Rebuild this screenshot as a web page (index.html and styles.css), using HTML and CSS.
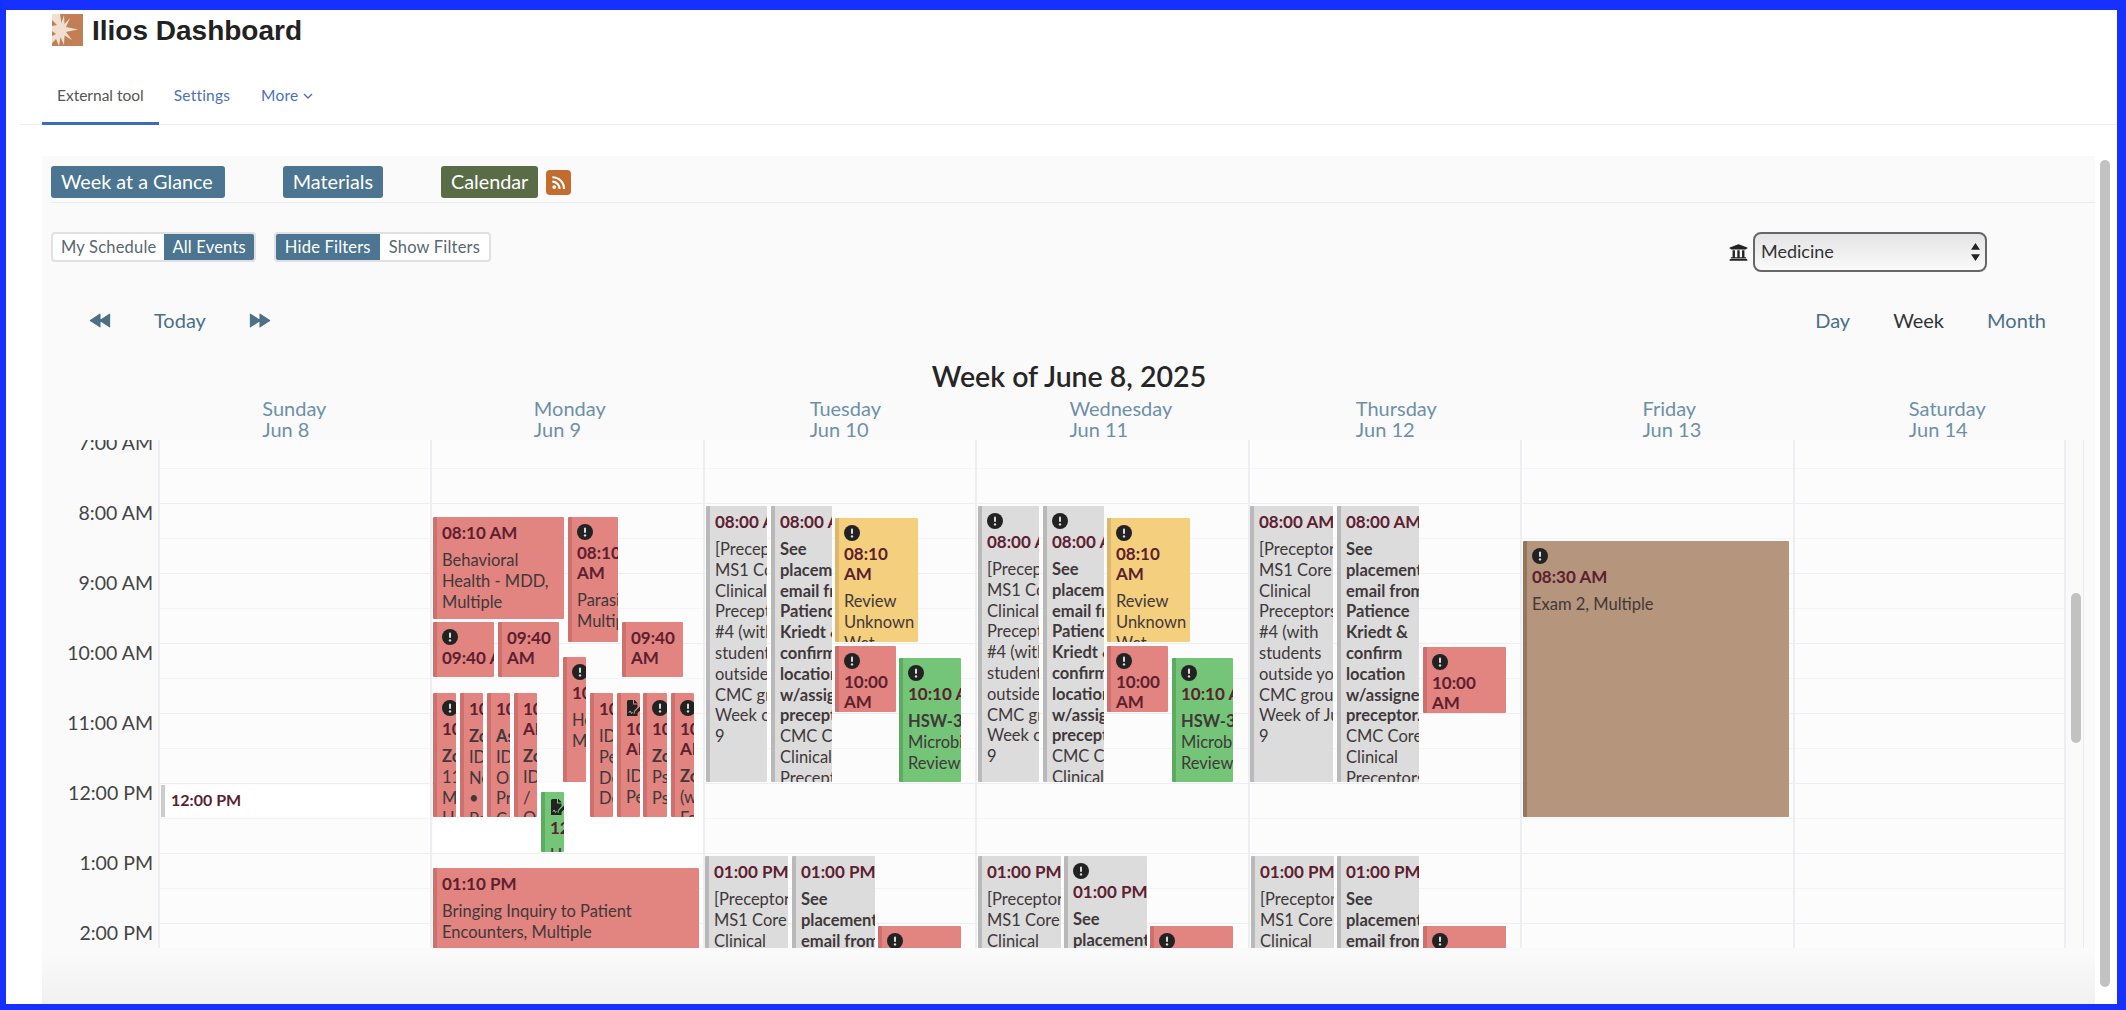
FILE: index.html
```html
<!DOCTYPE html>
<html lang="en">
<head>
<meta charset="utf-8">
<title>Ilios Dashboard</title>
<link rel="stylesheet" href="styles.css">
</head>
<body>
<svg class="defs" width="0" height="0" aria-hidden="true">
  <symbol id="alert" viewBox="0 0 16 16"><circle cx="8" cy="8" r="8" fill="#222"/><rect x="7" y="3.6" width="2" height="5.4" rx="1" fill="#dcdcdc"/><circle cx="8" cy="11.400" r="1.200" fill="#dcdcdc"/></symbol>
  <symbol id="doc" viewBox="0 0 16 16"><path d="M1 1.5A1.5 1.5 0 0 1 2.500 0H7v4.500h4.500V7L8 11l-.5 3 3-.7 1-1V16H1z" fill="#222"/><path d="M8.500 0l3 3v.5h-3.500V0z" fill="#222"/><path d="M9 11.500l5-5 2 2-5 5-2.500.5z" fill="#222"/><path d="M3 12.500c1-2 1.500-1.500 2 0s1 .5 1.500 0" fill="none" stroke="#ddd" stroke-width="1"/></symbol>
</svg>
<div class="frame">
  <header class="site-head">
    <svg class="logo" viewBox="0 0 31 32" aria-hidden="true">
      <rect width="31" height="32" fill="#c27f55"/>
      <path d="M0 0H8L9.500 9 12 1 12.500 10 18 4 14 13 26 15.500 14 18 20 26 12.500 21.500 12 31 8.500 23 7 32 4 25 0 29 0 22 4 20 0 17 0 12 5 11 0 6z" fill="#f0dfd0"/>
    </svg>
    <h1 class="site-title">Ilios Dashboard</h1>
  </header>
  <nav class="tabs">
    <a class="tab tab-on">External tool</a>
    <a class="tab">Settings</a>
    <a class="tab tab-more">More <svg class="chev" viewBox="0 0 10 6" aria-hidden="true"><path d="M1 1l4 4 4-4" fill="none" stroke="#4a72b8" stroke-width="1.400"/></svg></a>
  </nav>
  <main class="panel">
    <div class="main-nav">
      <a class="btn btn-wide">Week at a Glance</a>
      <a class="btn">Materials</a>
      <span class="btn-group">
        <a class="btn btn-on">Calendar</a>
        <span class="rss"><svg viewBox="0 0 16 16" aria-hidden="true"><circle cx="4" cy="12.300" r="1.800" fill="#fff"/><path d="M2.200 7.200a6.800 6.800 0 0 1 6.800 6.800M2.200 3a11 11 0 0 1 11 11" fill="none" stroke="#fff" stroke-width="2"/></svg></span>
      </span>
    </div>
    <div class="filter-row">
      <div class="toggles">
        <div class="toggle"><span class="opt">My Schedule</span><span class="opt opt-on">All Events</span></div>
        <div class="toggle toggle-wide"><span class="opt opt-on">Hide Filters</span><span class="opt">Show Filters</span></div>
      </div>
      <div class="school">
        <svg class="bank" viewBox="0 0 512 512" aria-hidden="true"><path d="M496 128v16a8 8 0 0 1-8 8h-24v12c0 6.627-5.373 12-12 12H60c-6.627 0-12-5.373-12-12v-12H24a8 8 0 0 1-8-8v-16a8 8 0 0 1 4.941-7.392l232-88a7.996 7.996 0 0 1 6.118 0l232 88A8 8 0 0 1 496 128zm-24 304H40c-13.255 0-24 10.745-24 24v16a8 8 0 0 0 8 8h464a8 8 0 0 0 8-8v-16c0-13.255-10.745-24-24-24zM96 192v192H60c-6.627 0-12 5.373-12 12v20h416v-20c0-6.627-5.373-12-12-12h-36V192h-64v192h-64V192h-64v192h-64V192H96z" fill="#222"/></svg>
        <div class="select-wrap">
          <select class="select"><option>Medicine</option></select>
          <svg class="updown" viewBox="0 0 8 16" aria-hidden="true"><path d="M4 0l4 6H0zM4 16L0 10h8z" fill="#222"/></svg>
        </div>
      </div>
    </div>
    <div class="cal-nav">
      <div class="cal-move">
        <svg class="arrows" viewBox="0 0 20 14" aria-hidden="true"><path d="M10 1L1 7l9 6zM19 1l-9 6 9 6z" fill="#4b7088" stroke="#4b7088" stroke-linejoin="round"/></svg>
        <a class="cal-link">Today</a>
        <svg class="arrows" viewBox="0 0 20 14" aria-hidden="true"><path d="M1 1l9 6-9 6zM10 1l9 6-9 6z" fill="#4b7088" stroke="#4b7088" stroke-linejoin="round"/></svg>
      </div>
      <div class="cal-view">
        <a class="cal-link">Day</a>
        <a class="cal-link cal-link-on">Week</a>
        <a class="cal-link">Month</a>
      </div>
    </div>
    <h2 class="week-title">Week of June 8, 2025</h2>
    <div class="days">
      <div class="day-head"><span>Sunday<br>Jun 8</span></div>
      <div class="day-head"><span>Monday<br>Jun 9</span></div>
      <div class="day-head"><span>Tuesday<br>Jun 10</span></div>
      <div class="day-head"><span>Wednesday<br>Jun 11</span></div>
      <div class="day-head"><span>Thursday<br>Jun 12</span></div>
      <div class="day-head"><span>Friday<br>Jun 13</span></div>
      <div class="day-head"><span>Saturday<br>Jun 14</span></div>
    </div>
    <div class="scroller">
      <div class="grid">
        <div class="hours">
          <div class="hour">7:00 AM</div><div class="hour">8:00 AM</div><div class="hour">9:00 AM</div><div class="hour">10:00 AM</div><div class="hour">11:00 AM</div><div class="hour">12:00 PM</div><div class="hour">1:00 PM</div><div class="hour">2:00 PM</div>
        </div>

        <div class="col">
          <div class="noon" style="left:2px;top:352px;width:270px;height:32px">12:00 PM</div>
        </div>

        <div class="col">
          <div class="open-slot" style="left:2px;top:350px;width:270px;height:70px"></div>
          <div class="ev red" style="left:2px;top:84px;width:131px;height:102px"><div class="t">08:10 AM</div><div class="b">Behavioral<br>Health - MDD,<br>Multiple</div></div>
          <div class="ev red" style="left:137px;top:84px;width:50px;height:125px"><svg class="i"><use href="#alert"/></svg><div class="t">08:10<br>AM</div><div class="b">Parasitology,<br>Multiple</div></div>
          <div class="ev red" style="left:2px;top:189px;width:61px;height:55px"><svg class="i"><use href="#alert"/></svg><div class="t">09:40 AM</div></div>
          <div class="ev red" style="left:67px;top:189px;width:61px;height:55px"><div class="t">09:40<br>AM</div></div>
          <div class="ev red" style="left:191px;top:189px;width:61px;height:55px"><div class="t">09:40<br>AM</div></div>
          <div class="ev red" style="left:132px;top:224px;width:23px;height:125px"><svg class="i"><use href="#alert"/></svg><div class="t">10:10 AM</div><div class="b">Hematology<br>Multiple</div></div>
          <div class="ev red" style="left:2px;top:260px;width:23px;height:124px"><svg class="i"><use href="#alert"/></svg><div class="t">10:10 AM</div><div class="b"><b>Zoom</b><br>11:00<br>MS1<br>Hematology</div></div>
          <div class="ev red" style="left:29px;top:260px;width:23px;height:124px"><div class="t">10:10 AM</div><div class="b"><b>Zoom</b><br>ID<br>Neuro<br>•<br>Pain</div></div>
          <div class="ev red" style="left:56px;top:260px;width:23px;height:124px"><div class="t">10:10 AM</div><div class="b"><b>Asynchronous</b><br>ID<br>Ol<br>Pr<br>Co</div></div>
          <div class="ev red" style="left:83px;top:260px;width:23px;height:124px"><div class="t">10:10 AM<br>AM</div><div class="b"><b>Zoom</b><br>ID<br>/<br>Oral</div></div>
          <div class="ev green" style="left:110px;top:359px;width:23px;height:60px"><svg class="i"><use href="#doc"/></svg><div class="t">12:00 PM</div><div class="b">Unknown</div></div>
          <div class="ev red" style="left:159px;top:260px;width:23px;height:124px"><div class="t">10:10 AM</div><div class="b">ID<br>Pediatric<br>Derm<br>Derm</div></div>
          <div class="ev red" style="left:186px;top:260px;width:23px;height:124px"><svg class="i"><use href="#doc"/></svg><div class="t">10:10 AM<br>AM</div><div class="b">ID<br>Peds</div></div>
          <div class="ev red" style="left:212px;top:260px;width:24px;height:124px"><svg class="i"><use href="#alert"/></svg><div class="t">10:10 AM</div><div class="b"><b>Zoom</b><br>Psych<br>Psych</div></div>
          <div class="ev red" style="left:240px;top:260px;width:23px;height:124px"><svg class="i"><use href="#alert"/></svg><div class="t">10:10 AM<br>AM</div><div class="b"><b>Zoom</b><br>(with<br>Faculty</div></div>
          <div class="ev red" style="left:2px;top:435px;width:266px;height:100px"><div class="t">01:10 PM</div><div class="b">Bringing Inquiry to Patient<br>Encounters, Multiple</div></div>
        </div>

        <div class="col">
          <div class="ev gray" style="left:2px;top:73px;width:61px;height:276px"><div class="t">08:00 AM</div><div class="b">[Preceptor<br>MS1 Core<br>Clinical<br>Preceptors<br>#4 (with<br>students<br>outside your<br>CMC group<br>Week of June<br>9</div></div>
          <div class="ev gray" style="left:67px;top:73px;width:61px;height:276px"><div class="t">08:00 AM</div><div class="b"><b>See<br>placement<br>email from<br>Patience<br>Kriedt &amp;<br>confirm<br>location<br>w/assigned<br>preceptor.</b><br>CMC Core<br>Clinical<br>Preceptors</div></div>
          <div class="ev yellow" style="left:131px;top:85px;width:83px;height:124px"><svg class="i"><use href="#alert"/></svg><div class="t">08:10<br>AM</div><div class="b">Review<br>Unknown<br>Wet</div></div>
          <div class="ev red" style="left:131px;top:213px;width:61px;height:66px"><svg class="i"><use href="#alert"/></svg><div class="t">10:00<br>AM</div></div>
          <div class="ev green" style="left:195px;top:225px;width:62px;height:124px"><svg class="i"><use href="#alert"/></svg><div class="t">10:10 AM</div><div class="b"><b>HSW-3</b><br>Microbiology<br>Review</div></div>
          <div class="ev gray" style="left:1px;top:423px;width:83px;height:120px"><div class="t">01:00 PM</div><div class="b">[Preceptor<br>MS1 Core<br>Clinical</div></div>
          <div class="ev gray" style="left:88px;top:423px;width:83px;height:120px"><div class="t">01:00 PM</div><div class="b"><b>See<br>placement<br>email from</b></div></div>
          <div class="ev red" style="left:174px;top:493px;width:83px;height:60px"><svg class="i"><use href="#alert"/></svg></div>
        </div>

        <div class="col">
          <div class="ev gray" style="left:2px;top:73px;width:61px;height:276px"><svg class="i"><use href="#alert"/></svg><div class="t">08:00 AM</div><div class="b">[Preceptor<br>MS1 Core<br>Clinical<br>Preceptors<br>#4 (with<br>students<br>outside your<br>CMC group<br>Week of June<br>9</div></div>
          <div class="ev gray" style="left:67px;top:73px;width:61px;height:276px"><svg class="i"><use href="#alert"/></svg><div class="t">08:00 AM</div><div class="b"><b>See<br>placement<br>email from<br>Patience<br>Kriedt &amp;<br>confirm<br>location<br>w/assigned<br>preceptor.</b><br>CMC Core<br>Clinical<br>Preceptors</div></div>
          <div class="ev yellow" style="left:131px;top:85px;width:83px;height:124px"><svg class="i"><use href="#alert"/></svg><div class="t">08:10<br>AM</div><div class="b">Review<br>Unknown<br>Wet</div></div>
          <div class="ev red" style="left:131px;top:213px;width:61px;height:66px"><svg class="i"><use href="#alert"/></svg><div class="t">10:00<br>AM</div></div>
          <div class="ev green" style="left:196px;top:225px;width:61px;height:124px"><svg class="i"><use href="#alert"/></svg><div class="t">10:10 AM</div><div class="b"><b>HSW-3</b><br>Microbiology<br>Review</div></div>
          <div class="ev gray" style="left:2px;top:423px;width:83px;height:120px"><div class="t">01:00 PM</div><div class="b">[Preceptor<br>MS1 Core<br>Clinical</div></div>
          <div class="ev gray" style="left:88px;top:423px;width:83px;height:120px"><svg class="i"><use href="#alert"/></svg><div class="t">01:00 PM</div><div class="b"><b>See<br>placement</b></div></div>
          <div class="ev red" style="left:174px;top:493px;width:83px;height:60px"><svg class="i"><use href="#alert"/></svg></div>
        </div>

        <div class="col">
          <div class="ev gray" style="left:1px;top:73px;width:83px;height:276px"><div class="t">08:00 AM</div><div class="b">[Preceptors<br>MS1 Core<br>Clinical<br>Preceptors<br>#4 (with<br>students<br>outside your<br>CMC group<br>Week of June<br>9</div></div>
          <div class="ev gray" style="left:88px;top:73px;width:82px;height:276px"><div class="t">08:00 AM</div><div class="b"><b>See<br>placement<br>email from<br>Patience<br>Kriedt &amp;<br>confirm<br>location<br>w/assigned<br>preceptor.</b><br>CMC Core<br>Clinical<br>Preceptors</div></div>
          <div class="ev red" style="left:174px;top:214px;width:83px;height:66px"><svg class="i"><use href="#alert"/></svg><div class="t">10:00<br>AM</div></div>
          <div class="ev gray" style="left:2px;top:423px;width:83px;height:120px"><div class="t">01:00 PM</div><div class="b">[Preceptor<br>MS1 Core<br>Clinical</div></div>
          <div class="ev gray" style="left:88px;top:423px;width:82px;height:120px"><div class="t">01:00 PM</div><div class="b"><b>See<br>placement<br>email from</b></div></div>
          <div class="ev red" style="left:174px;top:493px;width:83px;height:60px"><svg class="i"><use href="#alert"/></svg></div>
        </div>

        <div class="col">
          <div class="ev brown" style="left:2px;top:108px;width:266px;height:276px"><svg class="i"><use href="#alert"/></svg><div class="t">08:30 AM</div><div class="b">Exam 2, Multiple</div></div>
        </div>

        <div class="col"></div>
      </div>
      <div class="inner-thumb"></div>
    </div>
  </main>
  <div class="outer-thumb"></div>
</div>
</body>
</html>
```

FILE: styles.css
```css
* { box-sizing: border-box; }
html, body { margin: 0; height: 100%; }
body {
  height: 1010px;
  overflow: hidden;
  background: #1530ff;
  padding: 10px 9px 6px 6px;
  font-family: "Lato", "Liberation Sans", sans-serif;
  color: #333;
}
.defs { position: absolute; }
.frame {
  position: relative;
  height: 100%;
  background: #fff;
  display: flex;
  flex-direction: column;
}
.site-head {
  height: 50px;
  padding: 4px 0 0 46px;
  display: flex;
  align-items: flex-start;
  gap: 9px;
}
.logo { width: 31px; height: 32px; flex: none; }
.site-title {
  margin: 0;
  font-size: 28px;
  line-height: 34px;
  font-weight: 700;
  color: #222;
  font-family: "Liberation Sans", sans-serif;
}
.tabs {
  height: 65px;
  margin-left: 14px;
  padding-left: 22px;
  border-bottom: 1px solid #eceef0;
  display: flex;
  align-items: stretch;
}
.tab {
  padding: 26px 15px 0;
  font-size: 15.500px;
  letter-spacing: .2px;
  line-height: 18px;
  color: #4a72b8;
  margin-right: 1px;
}
.tab-on {
  color: #555;
  letter-spacing: 0;
  margin-right: 0;
  height: 65px;
  border-bottom: 3px solid #3c6cbd;
}
.chev { width: 10px; height: 6px; vertical-align: 2px; }
.panel {
  flex: 1;
  margin: 31px 22px 0 36px;
  padding-left: 9px;
  background: linear-gradient(#fafafb 0, #fafafb 795px, #f1f1f1 100%);
  overflow: hidden;
}
.main-nav {
  padding-top: 10px;
  padding-bottom: 4px;
  border-bottom: 1px solid #e9ebee;
  display: flex;
  gap: 57px;
}
.btn {
  display: block;
  height: 32px;
  padding: 0 10px;
  border-radius: 3px;
  background: #4b7590;
  color: #fff;
  font-size: 19.800px;
  line-height: 31px;
}
.btn-wide { padding-right: 12px; margin-right: 1px; }
.btn-on { background: #5a6c46; }
.btn-group { display: flex; align-items: center; gap: 8px; margin-left: 1px; }
.rss {
  width: 25px;
  height: 25px;
  border-radius: 4px;
  background: #c26c30;
  padding: 4px;
  display: block;
}
.rss svg { display: block; width: 17px; height: 17px; }
.filter-row {
  margin-top: 29px;
  padding-right: 108px;
  height: 40px;
  display: flex;
  justify-content: space-between;
  align-items: flex-start;
}
.toggles { display: flex; gap: 18px; }
.toggle {
  display: flex;
  height: 30px;
  border: 2px solid #dfe1e4;
  border-radius: 4px;
  background: #fff;
  overflow: hidden;
}
.opt {
  padding: 0 8px;
  font-size: 16.500px;
  line-height: 26px;
  color: #5a6670;
  letter-spacing: .2px;
}
.toggle-wide .opt { padding: 0 9px; }
.opt-on { background: #4b7590; color: #fff; }
.school { display: flex; align-items: center; gap: 5px; }
.bank { width: 19px; height: 19px; }
.select-wrap { position: relative; width: 234px; height: 40px; }
.select {
  appearance: none;
  -webkit-appearance: none;
  width: 100%;
  height: 100%;
  padding: 0 0 2px 6px;
  border: 2px solid #666;
  border-radius: 8px;
  background: linear-gradient(#e4e4e6, #fafafa);
  font-family: inherit;
  font-size: 18px;
  color: #333;
}
.updown { position: absolute; right: 7px; top: 11px; width: 9px; height: 18px; }
.cal-nav {
  margin-top: 33px;
  height: 30px;
  padding: 0 49px 0 38px;
  display: flex;
  justify-content: space-between;
  align-items: center;
}
.cal-move { display: flex; align-items: center; gap: 43px; }
.cal-view { display: flex; align-items: center; gap: 43px; }
.arrows { width: 22px; height: 15px; }
.cal-link { font-size: 20px; line-height: 30px; color: #4b7088; }
.cal-link-on { color: #333; }
.week-title {
  margin: 24px 8px 0 0;
  height: 35px;
  font-size: 28.500px;
  line-height: 34px;
  font-weight: 600;
  text-align: center;
  color: #262626;
}
.days {
  margin-top: 4px;
  padding-left: 105.600px;
  display: grid;
  grid-template-columns: repeat(7, 275.500px);
  height: 42px;
}
.day-head {
  text-align: center;
  font-size: 20px;
  line-height: 21px;
  color: #6d90a8;
}
.day-head span { display: inline-block; text-align: left; }
.scroller {
  position: relative;
  width: 2033px;
  height: 508px;
  overflow: hidden;
  border-right: 1px solid #e9ebee;
}
.grid {
  margin-top: -7px;
  display: grid;
  grid-template-columns: 108px 272px 273px 272px 273px 272px 273px 272px;
}
.hours { border-right: 1px solid #eff0f2; padding-right: 5px; }
.hour {
  height: 70px;
  font-size: 19.500px;
  line-height: 20px;
  text-align: right;
  color: #444;
}
.col {
  position: relative;
  height: 560px;
  margin-left: -1px;
  border-left: 2px solid #eceef1;
  background:
    repeating-linear-gradient(#eceef2 0, #eceef2 1px, transparent 1px, transparent 35px, #f3f4f6 35px, #f3f4f6 36px, transparent 36px, transparent 70px),
    #fcfcfd;
}
.col:last-child { border-right: 2px solid #eceef1; }
.open-slot { position: absolute; background: #fff; margin-left: -1px; }
.noon {
  position: absolute;
  margin-left: -1px;
  background: #fff;
  border-left: 4px solid #ccc;
  padding: 5px 0 0 6px;
  font-size: 16px;
  line-height: 20px;
  font-weight: 700;
  color: #5a1f2f;
}
.ev {
  position: absolute;
  margin-left: -1px;
  padding: 6px 0 0 5px;
  border-left: 4px solid;
  border-radius: 1px;
  overflow: hidden;
  white-space: nowrap;
  font-size: 16.500px;
  line-height: 20.800px;
  color: #40383a;
}
.red { background: #e28480; border-color: #cd706e; }
.green { background: #74c578; border-color: #5cab61; }
.yellow { background: #f4cf7e; border-color: #dcb868; }
.gray { background: #dcdcdc; border-color: #b9b9b9; }
.brown { background: #b5957b; border-color: #94765f; }
.i { display: block; width: 16px; height: 16px; margin: 1px 0 3px; }
.t {
  font-size: 17px;
  line-height: 20px;
  font-weight: 700;
  color: #5c2030;
}
.b { margin-top: 7px; }
.inner-thumb {
  position: absolute;
  left: 2020px;
  top: 153px;
  width: 10px;
  height: 150px;
  border-radius: 5px;
  background: #c2c2c2;
}
.outer-thumb {
  position: absolute;
  right: 7px;
  top: 150px;
  width: 10px;
  height: 827px;
  border-radius: 5px;
  background: #c2c2c2;
}
```
